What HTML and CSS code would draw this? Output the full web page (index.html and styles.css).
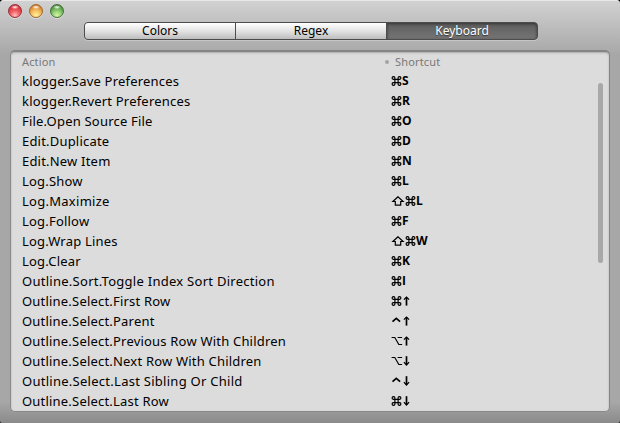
FILE: index.html
```html
<!DOCTYPE html>
<html lang="en">
<head>
<meta charset="utf-8">
<title>Preferences</title>
<link rel="stylesheet" href="styles.css">
</head>
<body>
<svg class="defs" width="0" height="0">
  <symbol id="cmd" viewBox="0 0 11 10"><path d="M3.9 3.4h3.2v3.2H3.9zM3.9 3.4H2.4A1.4 1.4 0 1 1 3.9 2zM7.1 3.4V2a1.4 1.4 0 1 1 1.5 1.4zM7.1 6.6h1.5A1.4 1.4 0 1 1 7.1 8zM3.9 6.6V8a1.4 1.4 0 1 1-1.5-1.4z"/></symbol>
  <symbol id="shift" viewBox="0 0 14 10"><path d="M7 .8 1.9 5.5h2.4v3.7h5.4V5.5h2.4z"/></symbol>
  <symbol id="ctrl" viewBox="0 0 12 10"><path class="heavy" d="M1.5 5.6 5.3 2.4l3.8 3.2"/></symbol>
  <symbol id="opt" viewBox="0 0 12 10"><path d="M.6 1.5h3.2l4 7h3.3M6.6 1.5h4.5"/></symbol>
  <symbol id="up" viewBox="0 0 8 10"><path class="heavy" d="M3.5 9.6V1.2"/><path d="M.9 3.7 3.5 1l2.6 2.7"/></symbol>
  <symbol id="down" viewBox="0 0 8 10"><path class="heavy" d="M3.5.2v8.4"/><path d="M.9 6.2 3.5 9l2.6-2.8"/></symbol>
</svg>
<main class="window">
  <header class="toolbar">
    <div class="lights"><i class="light red"></i><i class="light amber"></i><i class="light green"></i></div>
    <nav class="tabs">
      <button class="tab">Colors</button>
      <button class="tab">Regex</button>
      <button class="tab active">Keyboard</button>
    </nav>
  </header>
  <section class="panel">
    <div class="head"><span class="action">Action</span><i class="dot"></i><span>Shortcut</span></div>
    <div class="content">
      <div class="rows">
        <div class="row"><span class="action">klogger.Save Preferences</span><span class="keys"><svg class="cmd"><use href="#cmd"/></svg>S</span></div>
        <div class="row"><span class="action">klogger.Revert Preferences</span><span class="keys"><svg class="cmd"><use href="#cmd"/></svg>R</span></div>
        <div class="row"><span class="action">File.Open Source File</span><span class="keys"><svg class="cmd"><use href="#cmd"/></svg>O</span></div>
        <div class="row"><span class="action">Edit.Duplicate</span><span class="keys"><svg class="cmd"><use href="#cmd"/></svg>D</span></div>
        <div class="row"><span class="action">Edit.New Item</span><span class="keys"><svg class="cmd"><use href="#cmd"/></svg>N</span></div>
        <div class="row"><span class="action">Log.Show</span><span class="keys"><svg class="cmd"><use href="#cmd"/></svg>L</span></div>
        <div class="row"><span class="action wide">Log.Maximize</span><span class="keys"><svg class="shift"><use href="#shift"/></svg><svg class="cmd"><use href="#cmd"/></svg>L</span></div>
        <div class="row"><span class="action">Log.Follow</span><span class="keys"><svg class="cmd"><use href="#cmd"/></svg>F</span></div>
        <div class="row"><span class="action">Log.Wrap Lines</span><span class="keys"><svg class="shift"><use href="#shift"/></svg><svg class="cmd"><use href="#cmd"/></svg>W</span></div>
        <div class="row"><span class="action">Log.Clear</span><span class="keys"><svg class="cmd"><use href="#cmd"/></svg>K</span></div>
        <div class="row"><span class="action wide">Outline.Sort.Toggle Index Sort Direction</span><span class="keys"><svg class="cmd"><use href="#cmd"/></svg>I</span></div>
        <div class="row"><span class="action">Outline.Select.First Row</span><span class="keys"><svg class="cmd"><use href="#cmd"/></svg><svg class="arrow"><use href="#up"/></svg></span></div>
        <div class="row"><span class="action">Outline.Select.Parent</span><span class="keys"><svg class="mod"><use href="#ctrl"/></svg><svg class="arrow"><use href="#up"/></svg></span></div>
        <div class="row"><span class="action">Outline.Select.Previous Row With Children</span><span class="keys"><svg class="mod"><use href="#opt"/></svg><svg class="arrow"><use href="#up"/></svg></span></div>
        <div class="row"><span class="action">Outline.Select.Next Row With Children</span><span class="keys"><svg class="mod"><use href="#opt"/></svg><svg class="arrow"><use href="#down"/></svg></span></div>
        <div class="row"><span class="action wide">Outline.Select.Last Sibling Or Child</span><span class="keys"><svg class="mod"><use href="#ctrl"/></svg><svg class="arrow"><use href="#down"/></svg></span></div>
        <div class="row"><span class="action">Outline.Select.Last Row</span><span class="keys"><svg class="cmd"><use href="#cmd"/></svg><svg class="arrow"><use href="#down"/></svg></span></div>
      </div>
      <div class="scrollbar"></div>
    </div>
  </section>
</main>
</body>
</html>
```
FILE: styles.css
```css
* { box-sizing: border-box; }
body { margin: 0; background: #000; font-family: "Noto Sans", "DejaVu Sans", sans-serif; }
.defs { display: none; }
.window {
  width: 620px; height: 423px; padding: 0 10px 11px; overflow: hidden;
  display: flex; flex-direction: column;
  border-radius: 4px 4px 2px 2px;
  background: linear-gradient(#d2d2d2 0, #a7a7a7 55px, #a7a7a7 402px, #8a8a8a 423px);
  box-shadow: inset 0 1px #e8e8e8;
}
.toolbar { height: 50px; flex: none; display: flex; align-items: flex-start; }
.lights { width: 74px; height: 22px; padding-top: 4px; display: flex; gap: 7px; margin-left: -2px; margin-right: 2px; }
.light {
  width: 14px; height: 14px; border-radius: 50%; flex: none;
  box-shadow: 0 1px 0 #ddd;
}
.red { border: 1px solid #94333a; background: radial-gradient(ellipse 4px 2px at 50% 18%, #fff, transparent), radial-gradient(circle at 50% 85%, #ffc0c0 0, #f1656a 35%, #d9303a 75%); }
.amber { border: 1px solid #9c672d; background: radial-gradient(ellipse 4px 2px at 50% 18%, #fff, transparent), radial-gradient(circle at 50% 85%, #fff3a0 0, #f7bf62 40%, #d17c2a 80%); }
.green { border: 1px solid #456f38; background: radial-gradient(ellipse 4px 2px at 50% 18%, #fff, transparent), radial-gradient(circle at 50% 85%, #d7f6aa 0, #8ecb70 40%, #438c3b 80%); }
.tabs {
  width: 454px; height: 18px; margin-top: 22px; display: flex;
  border: 1px solid #4c4c4c; border-radius: 4px; background: #4c4c4c;
  box-shadow: 0 1px #c6c6c6;
}
.tab {
  flex: 1 1 0; border: 0; padding: 0; font: 12px/16px "Noto Sans", sans-serif; color: #000;
  background: linear-gradient(#fff, #e3e3e3 50%, #bdbdbd);
  border-right: 1px solid #4c4c4c;
}
.tab:first-child { border-radius: 3px 0 0 3px; }
.tab.active {
  border: 0; border-radius: 0 3px 3px 0; color: #fff; text-shadow: 0 1px 1px #333;
  background: linear-gradient(#5d5d5d, #757575); box-shadow: inset 0 1px 3px #333;
}
.panel {
  width: 600px; height: 362px; border: 1px solid #8a8a8a; border-top: 2px solid #858585;
  border-right-color: #858585; border-radius: 5px;
  background: #dcdcdc; box-shadow: inset 0 1px 2px #aaa;
}
.head { height: 19px; display: flex; font-size: 11px; line-height: 20px; color: #787878; padding-left: 11px; letter-spacing: .15px; }
.head .action { width: 363px; }
.dot { width: 4px; height: 4px; margin: 8px 6px 0 0; border-radius: 50%; background: #a4a4a4; }
.content { display: flex; height: 340px; }
.rows { width: 587px; }
.row { height: 20px; display: flex; align-items: center; padding-left: 11px; font-size: 13px; line-height: 20px; white-space: pre; color: #000; }
.row .action { width: 369px; letter-spacing: .2px; }
.row .action.wide { letter-spacing: .27px; }
.keys { display: flex; align-items: center; font: 700 12px/20px "Open Sans", "Noto Sans", sans-serif; }
.keys svg { display: block; height: 10px; fill: none; stroke: #000; stroke-width: 1.2px; }
.heavy { stroke-width: 1.7px; }
.cmd { width: 11px; }
.shift { width: 14px; }
.mod { width: 12px; }
.arrow { width: 8px; }
.cmd + .arrow { margin-left: 1px; }
.scrollbar { width: 5px; height: 180px; margin-top: 12px; border-radius: 3px; background: #a8a8a8; }
```
